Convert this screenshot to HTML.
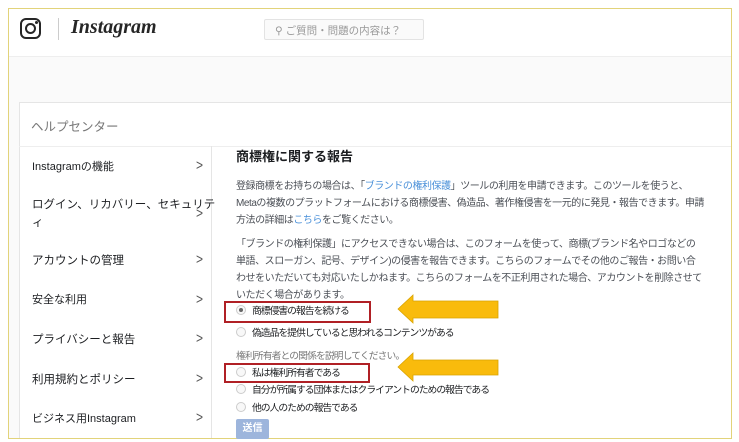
<!DOCTYPE html>
<html><head><meta charset="utf-8"><style>
*{margin:0;padding:0;box-sizing:border-box}
body{width:739px;height:442px;overflow:hidden;background:#fff;font-family:"Liberation Sans","Noto Sans CJK JP",sans-serif;position:relative;color:#1c1e21}
.a{position:absolute}
.side div{position:absolute;left:32px;font-size:11.5px;color:#1c1e21}
.chev{position:absolute;left:196px;font-size:12px;color:#555;transform:scaleY(1.2)}
.p{font-size:10px;letter-spacing:-0.45px;color:#4b4f56;line-height:17px;white-space:nowrap}
.lnk{color:#4a90d9}
.r{position:absolute;left:236px;width:10px;height:10px;border:1px solid #ccc;border-radius:50%;background:#f8f8f8}
.rl{position:absolute;left:252px;font-size:9.8px;letter-spacing:-1.0px;color:#1c1e21;white-space:nowrap}
</style></head><body>
<div class="a" style="left:8px;top:8px;width:724px;height:431px;border:1px solid #e2d37a;overflow:hidden">
 <div class="a" style="left:0;top:0;width:724px;height:48px;background:#fff;border-bottom:1px solid #eee"></div>
 <div class="a" style="left:0;top:48px;width:724px;height:400px;background:#fafafa"></div>
 <div class="a" style="left:11px;top:9px;width:21px;height:21px;border:2.5px solid #262626;border-radius:6px"></div>
 <div class="a" style="left:16px;top:14px;width:11px;height:11px;border:2.5px solid #262626;border-radius:50%"></div>
 <div class="a" style="left:26px;top:12px;width:3px;height:3px;background:#262626;border-radius:50%"></div>
 <div class="a" style="left:49px;top:9px;width:1px;height:22px;background:#ccc"></div>
 <div class="a" style="left:62px;top:7px;font-family:'Liberation Serif',serif;font-style:italic;font-weight:bold;font-size:20px;color:#262626">Instagram</div>
 <div class="a" style="left:255px;top:10px;width:160px;height:21px;border:1px solid #e3e3e3;border-radius:2px;background:#fafafa;font-size:10.5px;color:#999;padding:3px 0 0 10px">⚲ ご質問・問題の内容は？</div>
 <div class="a" style="left:10px;top:93px;width:730px;height:350px;background:#fff;border:1px solid #e5e5e5"></div>
 <div class="a" style="left:10px;top:137px;width:730px;height:1px;background:#eee"></div>
 <div class="a" style="left:202px;top:137px;width:1px;height:300px;background:#e5e5e5"></div>
 <div class="a" style="left:22px;top:107px;font-size:12.5px;color:#777">ヘルプセンター</div>
</div>
<div class="side">
 <div style="top:158px;font-size:11px">Instagramの機能</div><span class="chev" style="top:158px">&gt;</span>
 <div style="top:196px;line-height:18px">ログイン、リカバリー、セキュリテ<br>ィ</div><span class="chev" style="top:206px">&gt;</span>
 <div style="top:252px">アカウントの管理</div><span class="chev" style="top:252px">&gt;</span>
 <div style="top:291px;font-size:11px">安全な利用</div><span class="chev" style="top:292px">&gt;</span>
 <div style="top:331px">プライバシーと報告</div><span class="chev" style="top:331px">&gt;</span>
 <div style="top:371px">利用規約とポリシー</div><span class="chev" style="top:371px">&gt;</span>
 <div style="top:410px;font-size:11px">ビジネス用Instagram</div><span class="chev" style="top:410px">&gt;</span>
</div>
<div class="a" style="left:236px;top:146px;font-size:13px;font-weight:bold">商標権に関する報告</div>
<div class="a p" style="left:236px;top:178px">登録商標をお持ちの場合は、「<span class="lnk">ブランドの権利保護</span>」ツールの利用を申請できます。このツールを使うと、<br>Metaの複数のプラットフォームにおける商標侵害、偽造品、著作権侵害を一元的に発見・報告できます。申請<br>方法の詳細は<span class="lnk">こちら</span>をご覧ください。</div>
<div class="a p" style="left:236px;top:236px">「ブランドの権利保護」にアクセスできない場合は、このフォームを使って、商標(ブランド名やロゴなどの<br>単語、スローガン、記号、デザイン)の侵害を報告できます。こちらのフォームでその他のご報告・お問い合<br>わせをいただいても対応いたしかねます。こちらのフォームを不正利用された場合、アカウントを削除させて<br>いただく場合があります。</div>
<div class="r" style="top:305px"><div style="width:4px;height:4px;background:#666;border-radius:50%;margin:2px"></div></div><div class="rl" style="top:303px">商標侵害の報告を続ける</div>
<div class="r" style="top:327px"></div><div class="rl" style="top:325px">偽造品を提供していると思われるコンテンツがある</div>
<div class="a" style="left:236px;top:348px;font-size:9.8px;letter-spacing:-0.9px;color:#777">権利所有者との関係を説明してください。</div>
<div class="r" style="top:367px"></div><div class="rl" style="top:365px">私は権利所有者である</div>
<div class="r" style="top:384px"></div><div class="rl" style="top:382px">自分が所属する団体またはクライアントのための報告である</div>
<div class="r" style="top:402px"></div><div class="rl" style="top:400px">他の人のための報告である</div>
<div class="a" style="left:236px;top:419px;width:33px;height:20px;background:#9db5dc;border-radius:2px;color:#fff;font-size:10px;font-weight:bold;text-align:center;line-height:20px">送信</div>
<div class="a" style="left:224px;top:301px;width:147px;height:22px;border:2px solid #b02025"></div>
<div class="a" style="left:224px;top:363px;width:146px;height:20px;border:2px solid #b02025"></div>
<svg class="a" style="left:0;top:0" width="739" height="442">
 <polygon points="398,309 413,295 413,301 498,301 498,318 413,318 413,323" fill="#f9bb0c" stroke="#d9a300" stroke-width="0.8"/>
 <polygon points="398,367 413,353 413,360 498,360 498,375 413,375 413,381" fill="#f9bb0c" stroke="#d9a300" stroke-width="0.8"/>
</svg>
</body></html>
